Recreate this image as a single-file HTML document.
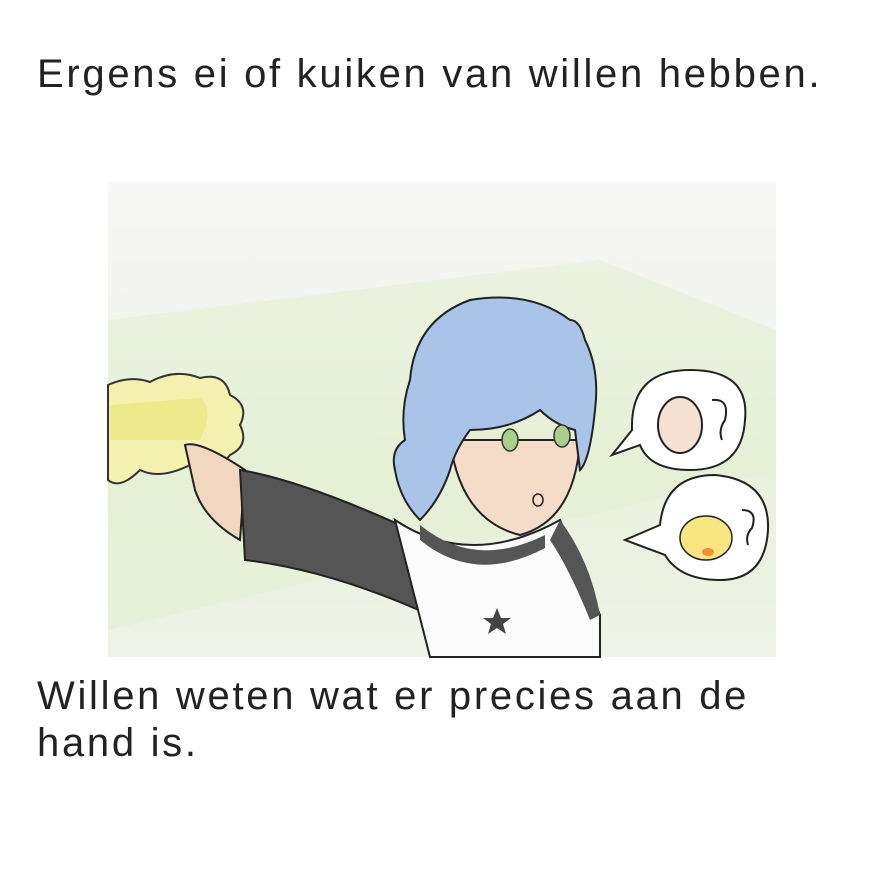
<!DOCTYPE html>
<html><head><meta charset="utf-8"><style>
html,body{margin:0;padding:0;background:#fff;width:888px;height:888px;overflow:hidden}
.t{position:absolute;left:37px;font-family:"Liberation Sans",sans-serif;font-size:40px;color:#222;letter-spacing:2.7px;line-height:47px;white-space:nowrap}
svg{position:absolute;left:0;top:0}
</style></head><body>
<svg width="888" height="888" viewBox="0 0 888 888">
<defs>
<linearGradient id="bg" x1="0" y1="0" x2="0" y2="1">
<stop offset="0" stop-color="#f7f7f5"/><stop offset="0.3" stop-color="#f2f4ee"/><stop offset="0.6" stop-color="#e9f1dc"/><stop offset="1" stop-color="#eef3e6"/>
</linearGradient>
</defs>
<rect x="108" y="182" width="668" height="475" fill="url(#bg)"/>
<polygon points="108,320 600,260 776,330 776,470 108,630" fill="#e2efcd" opacity="0.5"/>
<path d="M108,385 Q130,375 150,382 Q175,368 200,378 Q225,372 230,395 Q250,405 240,425 Q250,445 230,455 Q215,475 190,465 Q160,480 140,470 Q120,490 108,480 Z" fill="#f4f1b0" stroke="#333" stroke-width="2"/>
<path d="M110,405 L200,398 Q215,410 200,440 L110,440 Z" fill="#ecea8a"/>
<path d="M185,445 Q200,440 245,470 L240,540 Q205,520 195,490 Z" fill="#f2d7c0" stroke="#222" stroke-width="2"/>
<path d="M240,470 Q300,480 400,525 L430,615 Q330,570 245,560 Z" fill="#555" stroke="#222" stroke-width="2"/>
<path d="M395,520 Q470,570 560,520 L600,615 L600,657 L430,657 Z" fill="#fbfbfb" stroke="#222" stroke-width="2"/>
<path d="M560,520 Q590,560 600,615 L590,620 Q570,570 550,540 Z" fill="#555"/>
<path d="M420,525 Q475,570 545,535 L545,548 Q475,585 420,540 Z" fill="#555"/>
<polygon points="497,608 501,618 511,618 503,624 506,634 497,628 488,634 491,624 483,618 493,618" fill="#444"/>
<path d="M450,440 Q460,520 520,535 Q575,520 580,440 Z" fill="#f4dcc8" stroke="#222" stroke-width="2"/>
<path d="M410,380 Q415,320 470,300 Q530,290 570,320 Q580,320 585,340 Q600,370 595,410 Q590,460 580,470 L575,430 Q555,425 540,410 Q510,430 470,430 Q455,450 450,470 Q440,500 420,520 Q400,500 395,470 Q390,450 405,440 Q400,410 410,380 Z" fill="#a9c4e8" stroke="#222" stroke-width="2"/>
<ellipse cx="510" cy="440" rx="8" ry="11" fill="#a8d08a" stroke="#333" stroke-width="1.5"/>
<ellipse cx="562" cy="436" rx="8" ry="11" fill="#a8d08a" stroke="#333" stroke-width="1.5"/>
<ellipse cx="538" cy="500" rx="5" ry="6" fill="none" stroke="#222" stroke-width="1.5"/>
<path d="M690,370 Q750,370 745,420 Q742,470 690,470 Q650,470 640,445 L612,455 L632,430 Q630,370 690,370 Z" fill="#fff" stroke="#222" stroke-width="2"/>
<ellipse cx="680" cy="425" rx="22" ry="28" fill="#f6e2d2" stroke="#222" stroke-width="2"/>
<path d="M712,400 Q730,398 725,420 Q718,430 722,440" fill="none" stroke="#222" stroke-width="2"/>
<path d="M715,475 Q770,480 768,530 Q765,580 720,580 Q680,580 665,555 L625,540 L660,525 Q665,475 715,475 Z" fill="#fff" stroke="#222" stroke-width="2"/>
<ellipse cx="706" cy="538" rx="26" ry="22" fill="#f8e680" stroke="#222" stroke-width="1.5"/>
<ellipse cx="708" cy="552" rx="6" ry="4" fill="#f0903a"/>
<path d="M742,510 Q758,510 752,528 Q745,535 748,545" fill="none" stroke="#222" stroke-width="2"/>
</svg>
<div class="t" style="top:51px">Ergens ei of kuiken van willen hebben.</div>
<div class="t" style="top:673px">Willen weten wat er precies aan de<br>hand is.</div>
</body></html>
